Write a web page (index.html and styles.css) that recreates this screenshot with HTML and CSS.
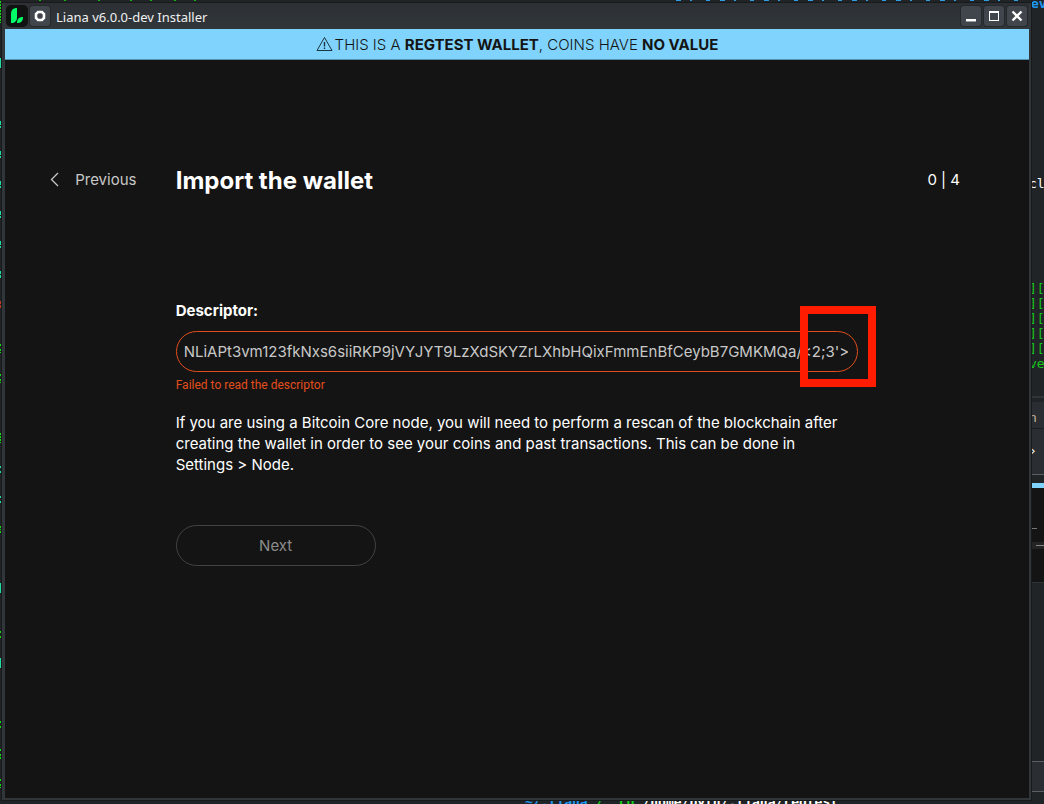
FILE: index.html
```
<!DOCTYPE html>
<html lang="en">
<head>
<meta charset="utf-8">
<title>Liana v6.0.0-dev Installer</title>
<link rel="stylesheet" href="styles.css">
</head>
<body>
<div class="desktop">
  <svg class="edge edge-left" width="2" height="804" aria-hidden="true">
    <path stroke="#14dc14" stroke-width="1" d="M.5 1v22M.5 344v3M.5 349v4M.5 374v3M.5 379v4M.5 433v10M.5 526v4M.5 531v2M.5 631v3M.5 636v3M.5 721v3M.5 726v2M.5 749v2M.5 754v5M.5 779v2M.5 784v4" stroke-dasharray="2 1"/>
    <path stroke="#1fe0a0" stroke-width="1" d="M.5 58v10M.5 121v4M.5 126v2M.5 151v4M.5 156v2M.5 181v4M.5 186v2M.5 211v4M.5 216v2M.5 241v4M.5 246v2M.5 271v3M.5 275v3M.5 466v2M.5 471v2M.5 496v2M.5 501v2M.5 583v10M.5 658v10"/>
    <path stroke="#c03a26" stroke-width="1" d="M.5 301v3M.5 305v3"/>
  </svg>
  <svg class="edge edge-top" width="1044" height="3" aria-hidden="true">
    <path stroke="#14b414" stroke-width="1" d="M39 .5h2M64 .5h2M98 .5h2M130 .5h2M150 .5h2M174 .5h2M194 .5h2"/>
    <path stroke="#2f9be0" stroke-width="1" stroke-dasharray="5 9 2 14 4 10" d="M676 .5h346"/>
  </svg>
  <div class="terminal-bottom" aria-hidden="true"><span class="term-blue">~/.liana</span> <span class="term-green">/  cd</span> /home/pyth/.liana/regtest</div>
  <div class="side side-top" aria-hidden="true">ev</div>
  <div class="side side-cl" aria-hidden="true">cl</div>
  <div class="side side-log" aria-hidden="true">
    <div>][</div>
    <div>][</div>
    <div>][</div>
    <div>][</div>
    <div>][</div>
    <div>ve</div>
  </div>
  <div class="side side-tab" aria-hidden="true">n</div>
  <div class="side side-bar" aria-hidden="true">›</div>
  <div class="side side-window" aria-hidden="true">
    <svg width="12" height="94"><path d="M0 40.5h5" stroke="#777"/><path d="M0 57.5h12" stroke="#242424" stroke-width="7"/><path d="M4 57.5h8" stroke="#888"/></svg>
  </div>
  <div class="side side-task" aria-hidden="true"></div>

  <div class="window">
    <header class="titlebar">
      <svg class="app-icon" width="22" height="22" viewBox="0 0 22 22" aria-hidden="true">
        <rect width="22" height="22" rx="5" fill="#111313"/>
        <path fill="#00ff66" d="M5 9C5 5 7 3 11 3V12C11 16 9 18 5 18Z"/>
        <path fill="#00ff66" d="M11 18C11 14 13 12 17 12C17 16 15 18 11 18Z"/>
      </svg>
      <button class="win-button" aria-label="Window menu">
        <svg width="12" height="12" viewBox="0 0 12 12"><path d="M4 2H8L10 4V8L8 10H4L2 8V4Z" fill="none" stroke="#fff" stroke-width="2.6"/></svg>
      </button>
      <span class="window-title">Liana v6.0.0-dev Installer</span>
      <div class="window-controls">
        <button class="win-button" aria-label="Minimize">
          <svg width="12" height="12" viewBox="0 0 12 12"><path d="M1 10H11" stroke="#fff" stroke-width="2"/><path d="M1 11.5H11" stroke="#999c9f"/></svg>
        </button>
        <button class="win-button" aria-label="Maximize">
          <svg width="12" height="12" viewBox="0 0 12 12"><path d="M1.5 1V11M10.5 1V11M1 10.5H11" stroke="#fff" fill="none"/><path d="M1 2H11" stroke="#fff" stroke-width="2"/></svg>
        </button>
        <button class="win-button" aria-label="Close">
          <svg width="12" height="12" viewBox="0 0 12 12"><path d="M1.5 1.5L10.5 10.5M10.5 1.5L1.5 10.5" stroke="#fff" stroke-width="2.4"/></svg>
        </button>
      </div>
    </header>
    <div class="banner">
      <svg width="17" height="16" viewBox="0 0 17 16" fill="none" stroke="#1b3442" aria-hidden="true">
        <path d="M8.5 1.5L1 14.5H16Z" stroke-linejoin="round"/>
        <path d="M8.5 6V10.5M8.5 11.5V13" stroke-width="1.4"/>
      </svg>
      <p class="banner-text">THIS IS A <strong>REGTEST WALLET</strong>, COINS HAVE <strong>NO VALUE</strong></p>
    </div>
    <main class="page">
      <div class="step-header">
        <button class="previous">
          <svg width="9" height="15" viewBox="0 0 9 15" fill="none" stroke="#c8c8c8" stroke-width="1.3" aria-hidden="true"><path d="M8 1L1.5 7.5L8 14"/></svg>
          Previous
        </button>
        <h1 class="title">Import the wallet</h1>
        <span class="progress">0 | 4</span>
      </div>
      <form class="step-body">
        <label class="label" for="descriptor">Descriptor:</label>
        <div class="field">
          <input class="input" id="descriptor" type="text" spellcheck="false" aria-describedby="error" value="NLiAPt3vm123fkNxs6siiRKP9jVYJYT9LzXdSKYZrLXhbHQixFmmEnBfCeybB7GMKMQa/&lt;2;3'&gt;">
          <div class="highlight"></div>
        </div>
        <p class="error" id="error">Failed to read the descriptor</p>
        <p class="hint">If you are using a Bitcoin Core node, you will need to perform a rescan of the blockchain after creating the wallet in order to see your coins and past transactions. This can be done in Settings &gt; Node.</p>
        <button class="next" type="button" disabled>Next</button>
      </form>
    </main>
  </div>
</div>
</body>
</html>
```
FILE: styles.css
```
* { box-sizing: border-box; }

body {
  margin: 0;
  background: #202426;
  color: #fff;
  font-family: Inter, "Liberation Sans", sans-serif;
  font-size: 15px;
  line-height: 21px;
}

button, input { font: inherit; }
h1, p { margin: 0; }

.desktop {
  position: relative;
  min-height: 100vh;
  overflow: hidden;
}

/* Desktop behind the window */
.edge { position: absolute; top: 0; left: 0; }

.terminal-bottom {
  position: absolute;
  left: 525px;
  bottom: -5px;
  font: bold 13px/15px "DejaVu Sans Mono", monospace;
  white-space: pre;
}
.term-blue { color: #1d99f3; }
.term-green { color: #11d116; }

.side {
  position: absolute;
  left: calc(100% - 12px);
  width: 12px;
  overflow: hidden;
  white-space: nowrap;
  font: 13px/15px "DejaVu Sans Mono", monospace;
  text-indent: -3px;
}
.side-top { top: -4px; color: #1d99f3; font-weight: bold; text-indent: -1px; }
.side-cl { top: 176px; }
.side-log { top: 281px; height: 117px; color: #17c51b; border-bottom: 2px solid #2f3439; }
.side-tab { top: 402px; height: 27px; padding-top: 8px; background: #2a2e32; color: #c2b49a; border-bottom: 1px solid #1b1e20; }
.side-bar { top: 429px; height: 46px; padding-top: 14px; background: #2a2e32; border-bottom: 1px solid #5a5f63; }
.side-window { top: 483px; height: 100px; background: #141414; border-top: 5px solid #7fd3fc; border-bottom: 1px solid #303336; text-indent: 0; }
.side-task { top: 761px; height: 31px; background: #2a2e32; border: solid #5a5f63; border-width: 1px 0; }

/* Window frame */
.window {
  position: absolute;
  inset: 3px 13px 4px 2px;
  display: flex;
  flex-direction: column;
  padding: 0 2px 2px 3px;
  background: #31363b;
  box-shadow: 0 0 0 1px #17191b;
}

.titlebar {
  display: flex;
  align-items: center;
  gap: 2px;
  height: 26px;
  padding: 0 2px 0 1px;
  background: linear-gradient(#2c3034, #31363a);
  flex: none;
}
.window-title {
  flex: 1;
  padding: 2px 0 0 4px;
  color: #eff0f1;
  font: 13px/18px "Noto Sans", sans-serif;
}
.window-controls { display: flex; gap: 3px; }
.win-button {
  display: grid;
  place-items: center;
  width: 20px;
  height: 20px;
  padding: 0;
  background: #40464c;
  border: 0;
  border-radius: 3px;
  box-shadow: 0 0 0 1px #25292c;
}

.banner {
  flex: none;
  display: flex;
  align-items: center;
  justify-content: center;
  gap: 2px;
  height: 31px;
  background: #7fd3fc;
  border-bottom: 1px solid #5692b0;
  color: #141414;
}
.banner-text { font-weight: 300; }
.banner-text strong { font-weight: 700; }

/* Installer step */
.page {
  flex: 1;
  padding-top: 100px;
  background: #141414;
}
.step-header {
  display: grid;
  grid-template-columns: minmax(0, 2fr) minmax(0, 8fr) minmax(0, 2fr);
  align-items: center;
}
.previous {
  display: flex;
  align-items: center;
  justify-content: center;
  gap: 16px;
  padding: 9px 0 11px 6px;
  background: none;
  border: 0;
  color: #c8c8c8;
}
.title {
  font-size: 24px;
  font-weight: 700;
  line-height: 32px;
}
.progress {
  padding-bottom: 2px;
  text-align: center;
}

.step-body {
  width: calc(100% * 8 / 12);
  margin: 99px auto 0;
}
.label {
  display: block;
  font-weight: 700;
}
.field { position: relative; margin-top: 10px; }
.input {
  display: block;
  width: 100%;
  height: 41px;
  padding: 0 9px 1px 7px;
  background: none;
  border: 1px solid #e24e1b;
  border-radius: 21px;
  color: #c8c8c8;
}
.highlight {
  position: absolute;
  top: -25px;
  right: -18px;
  width: 76px;
  height: 81px;
  border: 8px solid #ff1c00;
  pointer-events: none;
}
.error {
  margin-top: 4px;
  color: #e24e1b;
  font: 12px/18px Roboto, sans-serif;
}
.hint {
  margin-top: 18px;
  padding-right: 16px;
}
.next {
  display: block;
  width: 200px;
  height: 41px;
  margin-top: 50px;
  background: none;
  border: 1px solid #424242;
  border-radius: 21px;
  color: #8c8c8c;
}
```
